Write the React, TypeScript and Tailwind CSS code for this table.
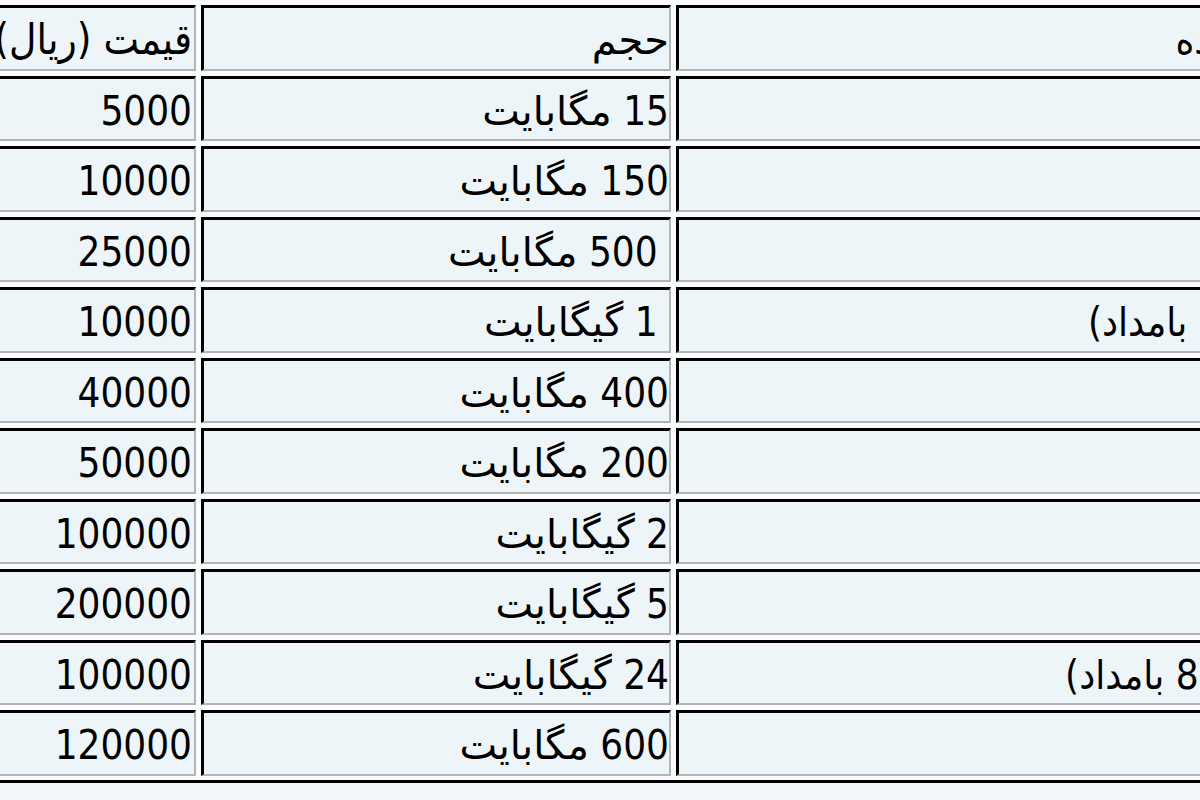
import React from 'react'

type Row = { period: string; num: string; unit: string; price: string; lead?: boolean }

const rows: Row[] = [
  { period: 'یک روزه', num: '15', unit: 'مگابایت', price: '5000' },
  { period: 'هفتگی', num: '150', unit: 'مگابایت', price: '10000' },
  { period: 'ماهانه', num: '500', unit: 'مگابایت', price: '25000', lead: true },
  { period: 'شبانه (2 تا 8 بامداد)', num: '1', unit: 'گیگابایت', price: '10000', lead: true },
  { period: 'هفتگی', num: '400', unit: 'مگابایت', price: '40000' },
  { period: 'ماهانه', num: '200', unit: 'مگابایت', price: '50000' },
  { period: 'ماهانه', num: '2', unit: 'گیگابایت', price: '100000' },
  { period: 'ماهانه', num: '5', unit: 'گیگابایت', price: '200000' },
  { period: 'شبانه (12 تا 8 بامداد)', num: '24', unit: 'گیگابایت', price: '100000' },
  { period: 'ماهانه', num: '600', unit: 'مگابایت', price: '120000' },
]

const cell =
  'flex items-center pt-[4px] bg-[#eef5f8] border-t-[3px] border-l-[3px] border-t-black border-l-black border-b-2 border-r-2 border-b-[#b4b4b4] border-r-[#b4b4b4] whitespace-nowrap overflow-hidden'

function Cell({ children, className = '' }: { children?: React.ReactNode; className?: string }) {
  return <div className={`${cell} ${className}`}>{children}</div>
}

export default function App() {
  return (
    <div
      className="w-[1200px] h-[800px] overflow-hidden bg-[#f2f8fa] text-black text-[40px] leading-none"
      style={{ fontFamily: '"DejaVu Sans Condensed", "DejaVu Sans", sans-serif' }}
    >
      <div className="ml-[-70px] mt-[-2px] w-max">
        <div
          dir="rtl"
          className="grid grid-cols-[750px_470px_258px] auto-rows-[65.5px] gap-[5px] p-[5px] pb-[4px] bg-[#fafcfd] border-t-2 border-r-2 border-t-[#c4c4c4] border-r-[#c4c4c4] border-b-[3px] border-l-[3px] border-b-black border-l-black"
        >
          {/* header */}
          <Cell className="pr-[50px]">مدت استفاده</Cell>
          <Cell className="font-['DejaVu_Sans']">حجم</Cell>
          <Cell className="pr-[2px] text-[42px]">قیمت (ریال)</Cell>
          {rows.map((r, i) => (
            <React.Fragment key={i}>
              <Cell className="pr-[29px]">{r.period}</Cell>
              <Cell>
                <span>
                  {r.lead ? '\u00a0' : ''}
                  {r.num}{' '}
                  <span className="font-['DejaVu_Sans']">{r.unit}</span>
                </span>
              </Cell>
              <Cell className="pr-[2px]">{r.price}</Cell>
            </React.Fragment>
          ))}
        </div>
      </div>
    </div>
  )
}
